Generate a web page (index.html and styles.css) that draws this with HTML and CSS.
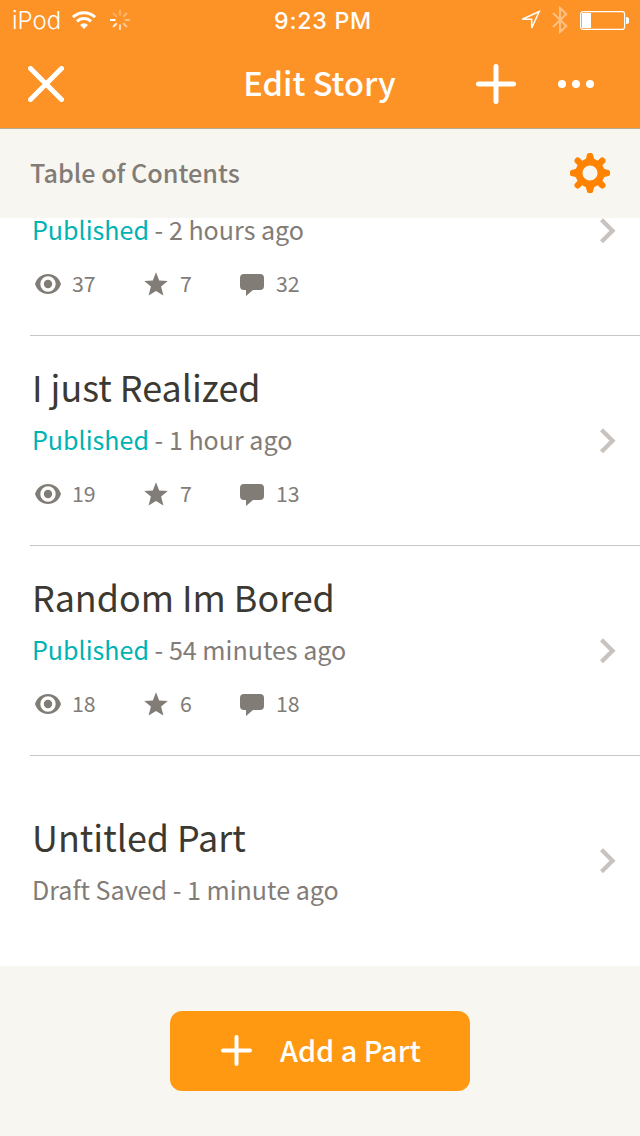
FILE: index.html
```html
<!DOCTYPE html>
<html lang="en">
<head>
<meta charset="utf-8">
<title>Edit Story</title>
<link rel="stylesheet" href="styles.css">
</head>
<body>
<svg class="defs" width="0" height="0" aria-hidden="true">
  <symbol id="eye" viewBox="0 0 26 20"><path fill-rule="evenodd" d="M13 0C6.500 0 1.800 4.200 0 10c1.800 5.800 6.500 10 13 10s11.200-4.200 13-10C24.200 4.200 19.500 0 13 0zm0 2.300a7.700 7.700 0 1 1 0 15.400 7.700 7.700 0 0 1 0-15.400z"/><circle cx="13" cy="10" r="4.200"/></symbol>
  <symbol id="star" viewBox="0 0 24 24"><path d="M12 .3l3.200 8.300 8.600.5-6.700 5.500 2.300 8.900-7.400-4.600-7.400 4.600 2.300-8.900L.2 9.100l8.600-.5z"/></symbol>
  <symbol id="bubble" viewBox="0 0 24 22"><path d="M4 0h16a4 4 0 0 1 4 4v8a4 4 0 0 1-4 4h-7l-7 6v-6H4a4 4 0 0 1-4-4V4a4 4 0 0 1 4-4z"/></symbol>
  <symbol id="chevron" viewBox="0 0 16 26"><path d="M1.500 1.700l11 11-11 11" fill="none" stroke="#c8c3be" stroke-width="4.300"/></symbol>
</svg>

<header class="top">
  <div class="status">
    <div class="status-left">
      <span class="carrier">iPod</span>
      <svg class="wifi" width="24" height="18" viewBox="0 0 24 18" fill="none" stroke="#fff" stroke-width="3"><path d="M1 6.200a15.600 15.600 0 0 1 22 0M5 10.400a9.900 9.900 0 0 1 14 0"/><path d="M12 18l-4-4a5.700 5.700 0 0 1 8 0z" fill="#fff" stroke="none"/></svg>
      <svg class="spinner" width="20" height="20" viewBox="-10 -10 20 20" stroke="#fff" stroke-width="2"><path d="M0-4.500V-10" opacity=".3"/><path d="M3.200-3.200l3.800-3.800" opacity=".35"/><path d="M4.500 0H10" opacity=".42"/><path d="M3.200 3.200L7 7" opacity=".5"/><path d="M0 4.500V10" opacity=".65"/><path d="M-3.200 3.200L-7 7" opacity=".85"/><path d="M-4.500 0H-10"/><path d="M-3.200-3.200L-7-7" opacity=".28"/></svg>
    </div>
    <span class="clock">9:23 PM</span>
    <div class="status-right">
      <svg class="location" width="21" height="21" viewBox="0 0 21 21"><path d="M2.300 9.300L19.200 1.500 11.700 18V9.300z" fill="none" stroke="#fff" stroke-width="1.500"/></svg>
      <svg class="bluetooth" width="16" height="28" viewBox="0 0 16 28"><path d="M1 7l13.300 13-6.300 6V2l6.300 6L1 21" fill="none" stroke="#fff" stroke-opacity=".42" stroke-width="2.100"/></svg>
      <svg class="battery" width="49" height="19" viewBox="0 0 49 19"><rect x=".6" y=".6" width="44" height="17.800" rx="2.500" fill="none" stroke="#fff" stroke-width="1.200"/><path d="M2 2h9v15H2zM46 6a3.500 3.500 0 0 1 0 7z" fill="#fff"/></svg>
    </div>
  </div>
  <nav class="nav">
    <svg class="close" width="36" height="36" viewBox="0 0 36 36"><path d="M2.500 2.500l31 31m0-31l-31 31" stroke="#fff" stroke-width="5" stroke-linecap="round"/></svg>
    <h1 class="heading">Edit Story</h1>
    <div class="actions">
      <svg width="40" height="40" viewBox="0 0 40 40"><path d="M20 2.500v35M2.500 20h35" stroke="#fff" stroke-width="5" stroke-linecap="round"/></svg>
      <svg width="36" height="8" viewBox="0 0 36 8" fill="#fff"><circle cx="4" cy="4" r="4"/><circle cx="18" cy="4" r="4"/><circle cx="32" cy="4" r="4"/></svg>
    </div>
  </nav>
</header>

<section class="toc">
  <h2 class="toc-title">Table of Contents</h2>
  <svg class="gear" width="40" height="40" viewBox="-20 -20 40 40">
    <defs><path id="teeth" d="M-5.500-12.500L-4-14.500-3-18.500Q-2.600-20-1.200-20H1.200Q2.600-20 3-18.500L4-14.500 5.500-12.500V-10H-5.500zM-5.500 12.500L-4 14.500-3 18.500Q-2.600 20-1.200 20H1.200Q2.600 20 3 18.500L4 14.500 5.500 12.500V10H-5.500z"/></defs>
    <circle r="11.100" fill="none" stroke="#ff8300" stroke-width="7"/>
    <g fill="#ff8300"><use href="#teeth"/><use href="#teeth" transform="rotate(90)"/></g>
    <path d="M-9-9l-3.300-3.300M9-9l3.300-3.300M-9 9l-3.300 3.300M9 9l3.300 3.300" stroke="#ff8300" stroke-width="6.400" stroke-linecap="round"/>
  </svg>
</section>

<main class="list">
  <article class="row partial">
    <div class="body">
      <p class="meta"><span class="published">Published</span> - 2 hours ago</p>
      <div class="stats"><svg class="eye"><use href="#eye"/></svg><span class="num views">37</span><svg class="star"><use href="#star"/></svg><span class="num votes">7</span><svg class="bubble"><use href="#bubble"/></svg><span class="num comments">32</span></div>
    </div>
    <svg class="chevron"><use href="#chevron"/></svg>
  </article>
  <article class="row">
    <div class="body">
      <h3 class="title">I just Realized</h3>
      <p class="meta"><span class="published">Published</span> - 1 hour ago</p>
      <div class="stats"><svg class="eye"><use href="#eye"/></svg><span class="num views">19</span><svg class="star"><use href="#star"/></svg><span class="num votes">7</span><svg class="bubble"><use href="#bubble"/></svg><span class="num comments">13</span></div>
    </div>
    <svg class="chevron"><use href="#chevron"/></svg>
  </article>
  <article class="row">
    <div class="body">
      <h3 class="title">Random Im Bored</h3>
      <p class="meta"><span class="published">Published</span> - 54 minutes ago</p>
      <div class="stats"><svg class="eye"><use href="#eye"/></svg><span class="num views">18</span><svg class="star"><use href="#star"/></svg><span class="num votes">6</span><svg class="bubble"><use href="#bubble"/></svg><span class="num comments">18</span></div>
    </div>
    <svg class="chevron"><use href="#chevron"/></svg>
  </article>
  <article class="row draft">
    <div class="body">
      <h3 class="title">Untitled Part</h3>
      <p class="meta">Draft Saved - 1 minute ago</p>
    </div>
    <svg class="chevron"><use href="#chevron"/></svg>
  </article>
</main>

<footer class="footer">
  <button class="add" type="button">
    <svg width="32" height="32" viewBox="0 0 32 32"><path d="M16.500 3v27M3 16.500h27" stroke="#fff" stroke-width="4" stroke-linecap="round"/></svg>
    <span>Add a Part</span>
  </button>
</footer>
</body>
</html>
```
FILE: styles.css
```css
* { box-sizing: border-box; }
body {
  margin: 0;
  width: 640px;
  height: 1136px;
  display: flex;
  flex-direction: column;
  overflow: hidden;
  background: #f8f6f1;
  font-family: "Noto Sans CJK SC", sans-serif;
  color: #827c77;
}
svg { display: block; flex: none; }
.defs { position: absolute; }
h1, h2, h3, p { margin: 0; white-space: nowrap; }

.top { height: 129px; flex: none; background: #fd9226; border-bottom: 1px solid #b8aa90; color: #fff; }
.status {
  height: 40px;
  padding: 0 11px 0 12px;
  display: grid;
  grid-template-columns: 1fr auto 1fr;
  align-items: center;
  font-family: Inter, sans-serif;
  line-height: 40px;
}
.status-left, .status-right { display: flex; align-items: center; }
.status-right { justify-content: flex-end; }
.carrier { width: 60px; padding-top: 2px; line-height: 38px; font-size: 24px; font-weight: 300; }
.wifi { margin-top: -1px; }
.spinner { margin-left: 14px; }
.clock { padding: 2px 0 0 5px; line-height: 38px; font-size: 23.200px; font-weight: 500; letter-spacing: .75px; }
.bluetooth { margin-left: 11px; }
.battery { margin-left: 12px; }

.nav { height: 88px; padding: 0 46px 0 28px; display: grid; grid-template-columns: 1fr auto 1fr; align-items: center; }
.heading { padding-left: 17px; font-size: 32.600px; font-weight: 500; line-height: 84px; height: 88px; }
.actions { display: flex; align-items: center; justify-content: flex-end; gap: 42px; }

.toc { height: 89px; flex: none; padding: 0 30px; display: flex; align-items: flex-start; justify-content: space-between; }
.toc-title { font-size: 25.200px; font-weight: 500; line-height: 87px; }
.gear { margin-top: 24px; }

.list { height: 748px; flex: none; display: flex; flex-direction: column; justify-content: flex-end; background: #fff; }
.row { height: 210px; flex: none; margin-left: 30px; padding: 0 24px 0 2px; display: flex; align-items: center; justify-content: space-between; border-bottom: 1px solid #c8c7c6; }
.body { height: 100%; display: flex; flex-direction: column; justify-content: flex-end; padding-bottom: 23px; }
.title { font-size: 35.900px; font-weight: 400; line-height: 56px; color: #3c3933; }
.meta { font-size: 25.070px; line-height: 50px; }
.published { color: #00b2b2; }
.stats { height: 58px; display: flex; align-items: center; font-size: 21.300px; line-height: 58px; fill: #827c77; }
.stats svg { margin-top: 2px; }
.eye { width: 26px; height: 20px; margin-left: 3px; }
.star { width: 24px; height: 24px; }
.stats .bubble { width: 24px; height: 22px; margin-top: 4px; }
.num { margin-left: 11px; }
.views { width: 72px; }
.votes { width: 60px; margin-left: 12px; }
.comments { margin-left: 12px; }
.chevron { width: 16px; height: 26px; }
.partial { height: 118px; }
.partial .chevron { align-self: flex-start; }
.draft { border-bottom: 0; }
.draft .body { padding-bottom: 52px; }

.footer { flex: 1; padding-top: 45px; display: flex; justify-content: center; align-items: flex-start; }
.add { width: 300px; height: 80px; padding: 0 0 2px 50px; border: 0; border-radius: 12px; background: #ff9912; color: #fff; display: flex; align-items: center; gap: 28px; font: 500 28.800px/78px "Noto Sans CJK SC", sans-serif; }
```
